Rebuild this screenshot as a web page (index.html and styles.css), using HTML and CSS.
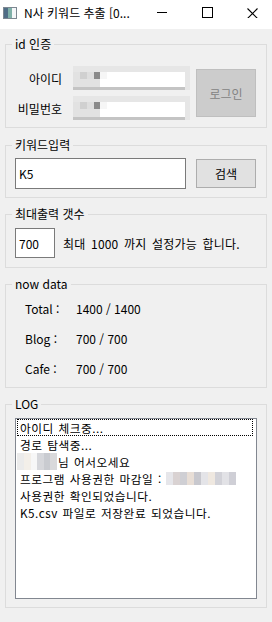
FILE: index.html
```html
<!DOCTYPE html>
<html lang="ko">
<head>
<meta charset="utf-8">
<title>N사 키워드 추출</title>
<link rel="stylesheet" href="styles.css">
</head>
<body>
<div class="window">
  <header class="titlebar">
    <svg class="app-icon" width="14" height="12" viewBox="0 0 14 12">
      <rect x="0.5" y="0.5" width="13" height="11" fill="#eef2f4" stroke="#7c8791"/>
      <rect x="1" y="1" width="4" height="10" fill="#4f6d86"/>
      <rect x="5" y="1" width="4" height="10" fill="#7fb0a8"/>
      <rect x="9" y="1" width="4" height="10" fill="#f4f6f8"/>
    </svg>
    <span class="title">N사 키워드 추출 [0...</span>
    <div class="controls">
      <svg width="11" height="11" viewBox="0 0 11 11"><line x1="0" y1="5.5" x2="10" y2="5.5" stroke="#000" stroke-width="1"/></svg>
      <svg width="11" height="11" viewBox="0 0 11 11"><rect x="0.5" y="0.5" width="10" height="10" fill="none" stroke="#000" stroke-width="1"/></svg>
      <svg width="11" height="11" viewBox="0 0 11 11" class="close"><path d="M0.5 1.5 L10.5 11.5 M10.5 1.5 L0.5 11.5" stroke="#000" stroke-width="1.1" fill="none"/></svg>
    </div>
  </header>

  <main class="main">
    <fieldset class="group group-login">
      <legend>id 인증</legend>
      <div class="login">
        <div class="fields">
          <label class="lbl">아이디</label>
          <div class="masked"></div>
          <label class="lbl">비밀번호</label>
          <div class="masked"></div>
        </div>
        <button class="btn btn-disabled">로그인</button>
      </div>
    </fieldset>

    <fieldset class="group">
      <legend>키워드입력</legend>
      <div class="search">
        <div class="textbox textbox-wide">K5</div>
        <button class="btn btn-search">검색</button>
      </div>
    </fieldset>

    <fieldset class="group">
      <legend>최대출력 갯수</legend>
      <div class="maxrow">
        <div class="textbox textbox-num">700</div>
        <span class="hint">최대 1000 까지 설정가능 합니다.</span>
      </div>
    </fieldset>

    <fieldset class="group">
      <legend>now data</legend>
      <div class="stats">
        <div class="stat"><span class="stat-lbl">Total :</span><span>1400 / 1400</span></div>
        <div class="stat"><span class="stat-lbl">Blog :</span><span>700 / 700</span></div>
        <div class="stat"><span class="stat-lbl">Cafe :</span><span>700 / 700</span></div>
      </div>
    </fieldset>

    <fieldset class="group">
      <legend>LOG</legend>
      <div class="logwrap">
        <ul class="listbox">
          <li class="item focused">아이디 체크중...</li>
          <li class="item">경로 탐색중...</li>
          <li class="item item-mask"><span class="redact redact-name"></span>님 어서오세요</li>
          <li class="item">프로그램 사용권한 마감일 :<span class="redact redact-date"></span></li>
          <li class="item">사용권한 확인되었습니다.</li>
          <li class="item">K5.csv 파일로 저장완료 되었습니다.</li>
        </ul>
      </div>
    </fieldset>
  </main>
</div>
</body>
</html>
```

FILE: styles.css
```css
html, body {
  margin: 0;
  padding: 0;
}
body {
  width: 272px;
  height: 622px;
  overflow: hidden;
  background: #f0f0f0;
  font-family: "Noto Sans CJK KR", "Noto Sans", sans-serif;
  font-size: 12px;
  color: #000;
}
.window {
  width: 272px;
  height: 622px;
  display: flex;
  flex-direction: column;
}
.titlebar {
  height: 29px;
  background: #fff;
  display: flex;
  align-items: flex-start;
  flex: 0 0 auto;
}
.app-icon {
  margin: 7px 0 0 3px;
}
.title {
  margin-left: 7px;
  flex: 1;
  line-height: 16px;
  margin-top: 5px;
  font-size: 12px;
  white-space: nowrap;
}
.controls {
  display: flex;
  gap: 34px;
  margin: 7px 14px 0 0;
}

.main {
  padding: 7px 5px 0 5px;
  display: flex;
  flex-direction: column;
  gap: 8px;
}
.group {
  margin: 0;
  padding: 0;
  border: 1px solid #dcdcdc;
  min-inline-size: 0;
}
.group-login {
  margin-bottom: 1px;
}
.group legend {
  margin-left: 6px;
  padding: 0 3px;
  line-height: 16px;
  font-size: 12px;
}

/* login */
.login {
  display: flex;
  align-items: center;
  padding: 14px 10px 7px 0;
}
.fields {
  display: grid;
  grid-template-columns: 56px 117px;
  column-gap: 11px;
  row-gap: 6px;
  align-items: center;
}
.lbl {
  text-align: right;
  white-space: nowrap;
  line-height: 16px;
  margin-top: 2px;
}
.masked {
  height: 24px;
  background:
    linear-gradient(#8a8a8a, #8a8a8a) 21px 6px / 6px 7px no-repeat,
    linear-gradient(#d0d0d0, #d0d0d0) 7px 6px / 7px 7px no-repeat,
    linear-gradient(#dedede, #dedede) 14px 6px / 7px 7px no-repeat,
    linear-gradient(#f6f6f6, #f6f6f6) 27px 6px / 7px 7px no-repeat,
    linear-gradient(#e2e2e2, #e2e2e2) 0 6px / 27px 15px no-repeat,
    linear-gradient(#c4c4c4, #c4c4c4) 0 21px / 112px 3px no-repeat,
    linear-gradient(#ffffff, #ffffff) 27px 6px / 85px 15px no-repeat,
    #e6e6e6;
}
.btn {
  font-family: inherit;
  font-size: 12px;
  margin: 0;
  padding: 0;
  width: 60px;
  box-sizing: border-box;
}
.btn-disabled {
  margin-left: 6px;
  height: 48px;
  background: #cccccc;
  border: 1px solid #bfbfbf;
  color: #838383;
}

/* search */
.search {
  display: flex;
  align-items: center;
  gap: 10px;
  padding: 5px 10px 8px 9px;
}
.textbox {
  background: #fff;
  border: 1px solid #7a7a7a;
  box-sizing: border-box;
  padding-left: 3px;
  display: flex;
  align-items: center;
}
.textbox-wide {
  width: 171px;
  height: 31px;
}
.btn-search {
  height: 29px;
  background: #e1e1e1;
  border: 1px solid #adadad;
  color: #000;
}

/* max count */
.maxrow {
  display: flex;
  align-items: center;
  padding: 6px 10px 9px 9px;
}
.textbox-num {
  width: 40px;
  height: 30px;
}
.hint {
  margin-left: 8px;
  word-spacing: 2px;
  letter-spacing: 0.2px;
}

/* stats */
.stats {
  padding: 1px 0 4px 19px;
}
.stat {
  height: 30px;
  display: flex;
  align-items: center;
}
.stat-lbl {
  width: 51px;
}

/* log */
.logwrap {
  padding: 6px 9px 8px 9px;
}
.listbox {
  list-style: none;
  margin: 0;
  padding: 0;
  width: 242px;
  height: 181px;
  box-sizing: border-box;
  border: 1px solid #828790;
  background: #fff;
  font-size: 11.7px;
  letter-spacing: 0.5px;
  word-spacing: 1px;
}
.item {
  height: 17px;
  line-height: 17px;
  margin: 0 3px 0 1px;
  padding-left: 3px;
  box-sizing: border-box;
  white-space: nowrap;
  display: flex;
  align-items: center;
}
.focused {
  border: 1px dotted #000;
  padding-left: 2px;
}
.redact {
  display: inline-block;
  flex: 0 0 auto;
}
.redact-name {
  width: 40px;
  height: 17px;
  margin-left: -3px;
  margin-right: 1px;
  background: linear-gradient(90deg,
    #ebebeb 0 7px, #f3efe9 7px 14px, #f7f7f7 14px 20px,
    #d6d7db 20px 27px, #c9cbd0 27px 33px, #d9d9db 33px 40px);
}
.redact-date {
  width: 70px;
  height: 13px;
  margin-left: 4px;
  background: linear-gradient(90deg,
    #e6e6ea 0 7px, #d9d2d2 7px 14px, #cfcfd4 14px 21px, #e8ded6 21px 28px,
    #c8c8ce 28px 35px, #e4e4e8 35px 42px, #efe8e0 42px 49px, #d2d2d8 49px 56px,
    #e2e2e6 56px 63px, #cfcfd6 63px 70px);
}
```
